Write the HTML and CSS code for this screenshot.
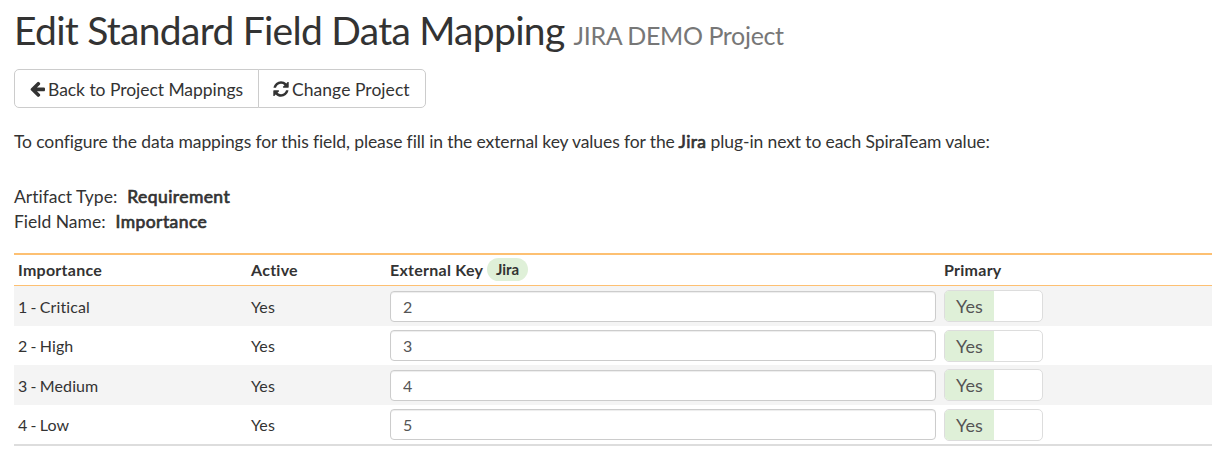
FILE: index.html
```html
<!DOCTYPE html>
<html lang="en">
<head>
<meta charset="utf-8">
<title>Edit Standard Field Data Mapping</title>
<link rel="stylesheet" href="styles.css">
</head>
<body>
<main class="page">
  <h1 class="title">Edit Standard Field Data Mapping <small class="subtitle">JIRA DEMO Project</small></h1>
  <div class="btn-group">
    <button class="btn" type="button"><svg class="icon" viewBox="128 0 1536 1792"><path d="M1664 896v128q0 53-32.500 90.500t-84.500 37.500h-704l293 294q38 36 38 90t-38 90l-75 76q-37 37-90 37-52 0-91-37l-651-652q-37-37-37-90 0-52 37-91l651-650q38-38 91-38 52 0 90 38l75 74q38 38 38 91t-38 91l-293 293h704q52 0 84.500 37.500t32.500 90.500z"/></svg><span class="label">Back to Project Mappings</span></button>
    <button class="btn" type="button"><svg class="icon" viewBox="128 0 1536 1792"><path d="M1639 1056q0 5-1 7-64 268-268 434.500t-478 166.500q-146 0-282.500-55t-243.500-157l-129 129q-19 19-45 19t-45-19-19-45v-448q0-26 19-45t45-19h448q26 0 45 19t19 45-19 45l-137 137q71 66 161 102t187 36q134 0 250-65t186-179q11-17 53-117 8-23 30-23h192q13 0 22.500 9.500t9.500 22.500zm25-800v448q0 26-19 45t-45 19h-448q-26 0-45-19t-19-45 19-45l138-138q-148-137-349-137-134 0-250 65t-186 179q-11 17-53 117-8 23-30 23h-199q-13 0-22.500-9.500t-9.500-22.500v-7q65-268 270-434.500t480-166.500q146 0 284 55.500t245 156.500l130-129q19-19 45-19t45 19 19 45z"/></svg><span class="label">Change Project</span></button>
  </div>
  <p class="intro">To configure the data mappings for this field, please fill in the external key values for the <b class="strong">Jira</b> plug-in next to each SpiraTeam value:</p>
  <dl class="facts">
    <div class="fact"><dt>Artifact Type:</dt><dd class="strong">Requirement</dd></div>
    <div class="fact"><dt>Field Name:</dt><dd class="strong">Importance</dd></div>
  </dl>
  <table class="grid">
    <colgroup><col class="col-name"><col class="col-active"><col class="col-key"><col></colgroup>
    <thead>
      <tr><th>Importance</th><th>Active</th><th>External Key <span class="badge">Jira</span></th><th>Primary</th></tr>
    </thead>
    <tbody>
      <tr><td>1 - Critical</td><td>Yes</td><td class="control"><input class="field" value="2"></td><td class="control"><div class="switch"><span class="switch-on">Yes</span></div></td></tr>
      <tr><td>2 - High</td><td>Yes</td><td class="control"><input class="field" value="3"></td><td class="control"><div class="switch"><span class="switch-on">Yes</span></div></td></tr>
      <tr><td>3 - Medium</td><td>Yes</td><td class="control"><input class="field" value="4"></td><td class="control"><div class="switch"><span class="switch-on">Yes</span></div></td></tr>
      <tr><td>4 - Low</td><td>Yes</td><td class="control"><input class="field" value="5"></td><td class="control"><div class="switch"><span class="switch-on">Yes</span></div></td></tr>
    </tbody>
  </table>
</main>
</body>
</html>
```
FILE: styles.css
```css
* { box-sizing: border-box; }
body {
  margin: 0;
  background: #fff;
  color: #333;
  font: 17.5px/25px Lato, "Liberation Sans", sans-serif;
}
.page { padding: 8px 17px 0 14px; }
.title { margin: 0; font-size: 39px; line-height: 44px; font-weight: 400; letter-spacing: -0.68px; word-spacing: -0.3px; white-space: nowrap; }
.subtitle { font-size: 25px; line-height: 1; letter-spacing: -0.33px; color: #777; }
.btn-group { display: flex; margin-top: 17px; }
.btn {
  display: flex;
  align-items: center;
  gap: 4px;
  height: 39px;
  padding: 0 15px;
  border: 1px solid #ccc;
  background: #fff;
  color: #333;
  font: inherit;
  letter-spacing: -0.04px;
  white-space: nowrap;
}
.btn:first-child { width: 245px; gap: 3px; border-radius: 5px 0 0 5px; }
.btn:last-child { width: 168px; margin-left: -1px; padding: 0 14px; gap: 3px; letter-spacing: 0.05px; border-radius: 0 5px 5px 0; }
.label { padding-top: 2px; }
.icon { width: 15px; height: 17.5px; fill: #333; flex: none; }
.btn:last-child .icon { width: 16px; height: 18px; }
.intro { margin: 21px 0 0; letter-spacing: -0.09px; word-spacing: -0.1px; white-space: nowrap; }
.intro .strong { margin-left: -0.5px; letter-spacing: 0.35px; }
.strong { font-weight: 400; -webkit-text-stroke: 0.7px #333; }
.facts { margin: 30px 0 19px; font-variant-ligatures: none; }
.fact { display: flex; gap: 10px; }
.fact dd { margin: 0; letter-spacing: 0.42px; }
.grid {
  width: 1198px;
  table-layout: fixed;
  border-collapse: separate;
  border-spacing: 0;
  border-top: 2px solid #fdc072;
  border-bottom: 2px solid #ddd;
  font-size: 16px;
  line-height: 22px;
  font-variant-ligatures: none;
}
.col-name { width: 233px; }
.col-active { width: 139px; }
.col-key { width: 554px; }
.grid th { height: 31px; padding: 0 4px; border-bottom: 1px solid #fdc072; text-align: left; font-weight: 700; letter-spacing: 0.26px; }
.grid td { height: 40px; padding: 2px 4px 0; vertical-align: middle; letter-spacing: 0.1px; word-spacing: -1px; }
.grid tbody tr:nth-child(even) td { height: 39px; padding-top: 0; }
.grid tbody tr:nth-child(odd) { background: #f4f4f4; }
.grid tbody tr td.control { padding: 4px 4px 0; vertical-align: top; }
.grid tbody tr:nth-child(even) td.control { padding-top: 4px; }
.badge {
  display: inline-block;
  height: 23px;
  padding: 0 9px;
  border-radius: 12px;
  background: #dff0d8;
  font-size: 15px;
  line-height: 23px;
  letter-spacing: 0;
  position: relative;
  top: -1px;
}
.field {
  display: block;
  width: 546px;
  height: 31px;
  padding: 0 12px;
  border: 1px solid #ccc;
  border-radius: 4px;
  background: #fff;
  box-shadow: inset 0 1px 1px rgba(0, 0, 0, .075);
  color: #555;
  font: inherit;
}
.grid tbody tr:nth-child(odd) .field { margin-top: 1px; }
.switch {
  width: 99px;
  height: 32px;
  border: 1px solid #ddd;
  border-radius: 5px;
  overflow: hidden;
  background: #fff;
}
.switch-on {
  display: block;
  width: 49px;
  height: 30px;
  background: #dff0d8;
  color: #555;
  font-size: 18px;
  line-height: 31px;
  text-align: center;
}
```
